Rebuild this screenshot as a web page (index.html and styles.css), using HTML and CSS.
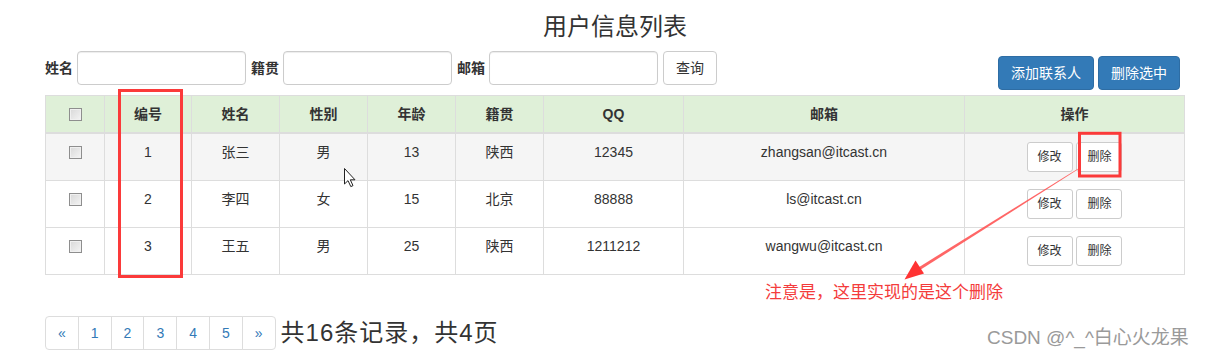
FILE: index.html
```html
<!DOCTYPE html>
<html lang="zh-CN">
<head>
<meta charset="utf-8">
<title>用户信息列表</title>
<link rel="stylesheet" href="styles.css">
</head>
<body>
<div class="page">
  <div class="container">
    <h3 class="title">用户信息列表</h3>
    <div class="toolbar">
      <form class="search">
        <label class="lbl">姓名</label><input class="field" type="text">
        <label class="lbl">籍贯</label><input class="field" type="text">
        <label class="lbl">邮箱</label><input class="field" type="text">
        <button type="button" class="btn btn-default">查询</button>
      </form>
      <div class="actions">
        <button type="button" class="btn btn-primary">添加联系人</button>
        <button type="button" class="btn btn-primary">删除选中</button>
      </div>
    </div>
    <table class="grid">
      <colgroup>
        <col class="c-chk"><col class="c-id"><col class="c-n"><col class="c-n"><col class="c-n"><col class="c-n"><col class="c-qq"><col class="c-mail"><col class="c-op">
      </colgroup>
      <thead>
        <tr>
          <th><span class="cb"></span></th><th>编号</th><th>姓名</th><th>性别</th><th>年龄</th><th>籍贯</th><th>QQ</th><th>邮箱</th><th>操作</th>
        </tr>
      </thead>
      <tbody>
        <tr class="hover">
          <td><span class="cb"></span></td><td>1</td><td>张三</td><td>男</td><td>13</td><td>陕西</td><td>12345</td><td>zhangsan@itcast.cn</td>
          <td><button type="button" class="btn btn-sm">修改</button> <button type="button" class="btn btn-sm">删除</button></td>
        </tr>
        <tr>
          <td><span class="cb"></span></td><td>2</td><td>李四</td><td>女</td><td>15</td><td>北京</td><td>88888</td><td>ls@itcast.cn</td>
          <td><button type="button" class="btn btn-sm">修改</button> <button type="button" class="btn btn-sm">删除</button></td>
        </tr>
        <tr>
          <td><span class="cb"></span></td><td>3</td><td>王五</td><td>男</td><td>25</td><td>陕西</td><td>1211212</td><td>wangwu@itcast.cn</td>
          <td><button type="button" class="btn btn-sm">修改</button> <button type="button" class="btn btn-sm">删除</button></td>
        </tr>
      </tbody>
    </table>
    <div class="footer">
      <ul class="pager">
        <li><a href="#">«</a></li><li><a href="#">1</a></li><li><a href="#">2</a></li><li><a href="#">3</a></li><li><a href="#">4</a></li><li><a href="#">5</a></li><li><a href="#">»</a></li>
      </ul>
      <span class="total">共16条记录，共4页</span>
    </div>
  </div>

  <svg class="marks" width="1207" height="357" viewBox="0 0 1207 357" xmlns="http://www.w3.org/2000/svg">
    <rect x="119.5" y="90.5" width="62" height="186" fill="none" stroke="#fb3a3a" stroke-width="3"/>
    <rect x="1079.5" y="133.3" width="40.5" height="42.7" fill="none" stroke="#fb3a3a" stroke-width="3"/>
    <polygon points="1078.2,169.3 1077.8,168.7 918.8,267.2 920.4,269.8" fill="#f55" opacity="0.9"/>
    <polygon points="904.5,279.5 924,273.5 915.5,260.5" fill="#f33"/>
    <path d="M344.5 168.5 L344.5 184 L348 180.6 L350.8 186.6 L353 185.6 L350.3 179.8 L355 179.8 Z" fill="#fff" stroke="#222" stroke-width="1" stroke-linejoin="round"/>
  </svg>
  <div class="note">注意是，这里实现的是这个删除</div>
  <div class="watermark">CSDN @^_^白心火龙果</div>
</div>
</body>
</html>
```
FILE: styles.css
```css
* { box-sizing: border-box; }
html, body { margin: 0; padding: 0; background: #fff; }
body {
  font-family: "Liberation Sans", Arial, "Noto Sans CJK SC", sans-serif;
  font-size: 14px;
  line-height: 20px;
  color: #333;
}
.page { position: relative; width: 1207px; height: 357px; overflow: hidden; }
.container { margin-left: 45px; width: 1140px; }
.title {
  margin: 14px 0 0;
  font-size: 24px;
  font-weight: normal;
  line-height: 26px;
  height: 26px;
  text-align: center;
}
.toolbar { display: flex; justify-content: space-between; align-items: flex-start; margin-top: 11px; height: 39px; }
.search { display: flex; align-items: center; margin: 0; }
.lbl { font-weight: bold; margin-right: 4px; }
.field {
  width: 169px; height: 34px; margin: 0 5px 0 0; padding: 6px 12px;
  border: 1px solid #ccc; border-radius: 4px;
  box-shadow: inset 0 1px 1px rgba(0,0,0,.075);
  font: inherit;
}
.actions { margin-top: 5px; margin-right: 5px; display: flex; gap: 4px; }
.btn {
  display: inline-block; height: 34px; padding: 6px 12px; margin: 0;
  font: inherit; font-size: 14px; line-height: 20px;
  border: 1px solid #ccc; border-radius: 4px; background: #fff; color: #333;
  cursor: pointer; white-space: nowrap;
}
.btn-primary { background: #337ab7; border-color: #2e6da4; color: #fff; }
.btn-sm { height: 30px; padding: 5px 10px; font-size: 12px; line-height: 18px; border-radius: 3px; }
.grid {
  margin-top: 5px; width: 1140px; table-layout: fixed;
  border-collapse: separate; border-spacing: 0;
  border-top: 1px solid #ddd; border-left: 1px solid #ddd;
}
.c-chk { width: 59px; }
.c-id { width: 87px; }
.c-n { width: 88px; }
.c-qq { width: 140px; }
.c-mail { width: 281px; }
.c-op { width: 220px; }
.grid th, .grid td {
  padding: 8px; text-align: center; vertical-align: top;
  border-right: 1px solid #ddd; border-bottom: 1px solid #ddd; line-height: 20px;
}
.grid thead tr { background: #dff0d8; }
.grid th { border-bottom: 2px solid #ddd; font-weight: bold; }
.grid tr.hover { background: #f5f5f5; }
.cb {
  display: inline-block; width: 13px; height: 13px; vertical-align: -2px;
  border: 1px solid #8e8e8e;
  background: linear-gradient(135deg, #d8d8d8 0%, #f4f4f4 100%);
  box-shadow: inset 0 0 0 1px #f0f0f0;
}
.footer { display: flex; align-items: center; margin-top: 41px; }
.pager { display: flex; list-style: none; margin: 0; padding: 0; }
.pager li a {
  display: block; padding: 6px 12px; line-height: 20px; height: 34px;
  border: 1px solid #ddd; margin-left: -1px; color: #337ab7; text-decoration: none; background: #fff;
}
.pager li:first-child a { margin-left: 0; border-radius: 4px 0 0 4px; }
.pager li:last-child a { border-radius: 0 4px 4px 0; }
.total { font-size: 24px; line-height: 30px; margin-left: 5px; letter-spacing: 1px; }
.marks { position: absolute; left: 0; top: 0; pointer-events: none; }
.note {
  position: absolute; left: 765px; top: 281px;
  font-size: 17px; line-height: 20px; color: #f43c3c;
  font-family: "Noto Sans CJK SC", sans-serif;
}
.watermark {
  position: absolute; left: 987px; top: 326px;
  font-size: 19px; line-height: 24px; color: #9a9a9a;
}
```
